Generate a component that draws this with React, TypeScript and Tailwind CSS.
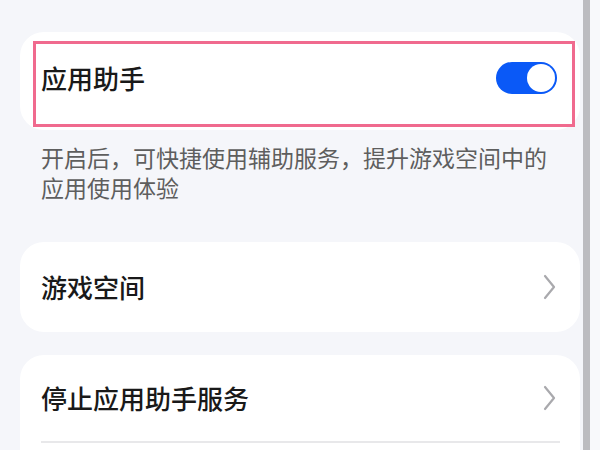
const Chevron = () => (
  <svg width="13" height="26" viewBox="0 0 13 26" fill="none">
    <polyline points="2,2 11,13 2,24" stroke="#a9a9ad" strokeWidth="2.2" strokeLinecap="round" strokeLinejoin="round" />
  </svg>
);

const Toggle = () => (
  <div className="flex h-[32px] w-[61px] items-center justify-end rounded-full bg-[#0a59f7] pr-[2px]">
    <div className="h-[28px] w-[28px] rounded-full bg-white" />
  </div>
);

export default function App() {
  return (
    <div
      className="flex h-[450px] w-[600px] overflow-hidden bg-[#f5f6fa]"
      style={{ fontFamily: '"Noto Sans CJK SC", "Noto Sans", sans-serif' }}
    >
      <main className="w-[583px] shrink-0 pl-5 pr-[3px] pt-8">
        {/* 应用助手 toggle card */}
        <div className="relative flex h-[98px] items-center justify-between rounded-[24px] bg-white pb-[6px] pl-[21px] pr-[23px]">
          <span className="text-[26px] font-medium leading-none text-[#191919]">应用助手</span>
          <Toggle />
          <div className="pointer-events-none absolute left-[13px] top-[9px] h-[86px] w-[542px] border-[3px] border-[#f06a8e]" />
        </div>

        <p className="mt-3 px-[21px] text-[23px] leading-[30px] text-[#5e5e5e]">
          开启后，可快捷使用辅助服务，提升游戏空间中的应用使用体验
        </p>

        {/* 游戏空间 */}
        <div className="mt-10 flex h-[90px] items-center justify-between rounded-[24px] bg-white pl-[21px] pr-[24px]">
          <span className="text-[26px] font-medium leading-none text-[#191919]">游戏空间</span>
          <Chevron />
        </div>

        {/* 停止应用助手服务 */}
        <div className="mt-[23px] rounded-t-[24px] bg-white px-[21px] pb-6">
          <div className="flex h-[86px] items-center justify-between pr-[3px]">
            <span className="text-[26px] font-medium leading-none text-[#191919]">停止应用助手服务</span>
            <Chevron />
          </div>
          <div className="h-[2px] w-[519px] bg-[#e8e8ea]" />
        </div>
      </main>
      <div className="w-[7px] shrink-0 bg-[#bcbcc0]" />
      <div className="flex-1 bg-[#f8f9fb]" />
    </div>
  );
}
